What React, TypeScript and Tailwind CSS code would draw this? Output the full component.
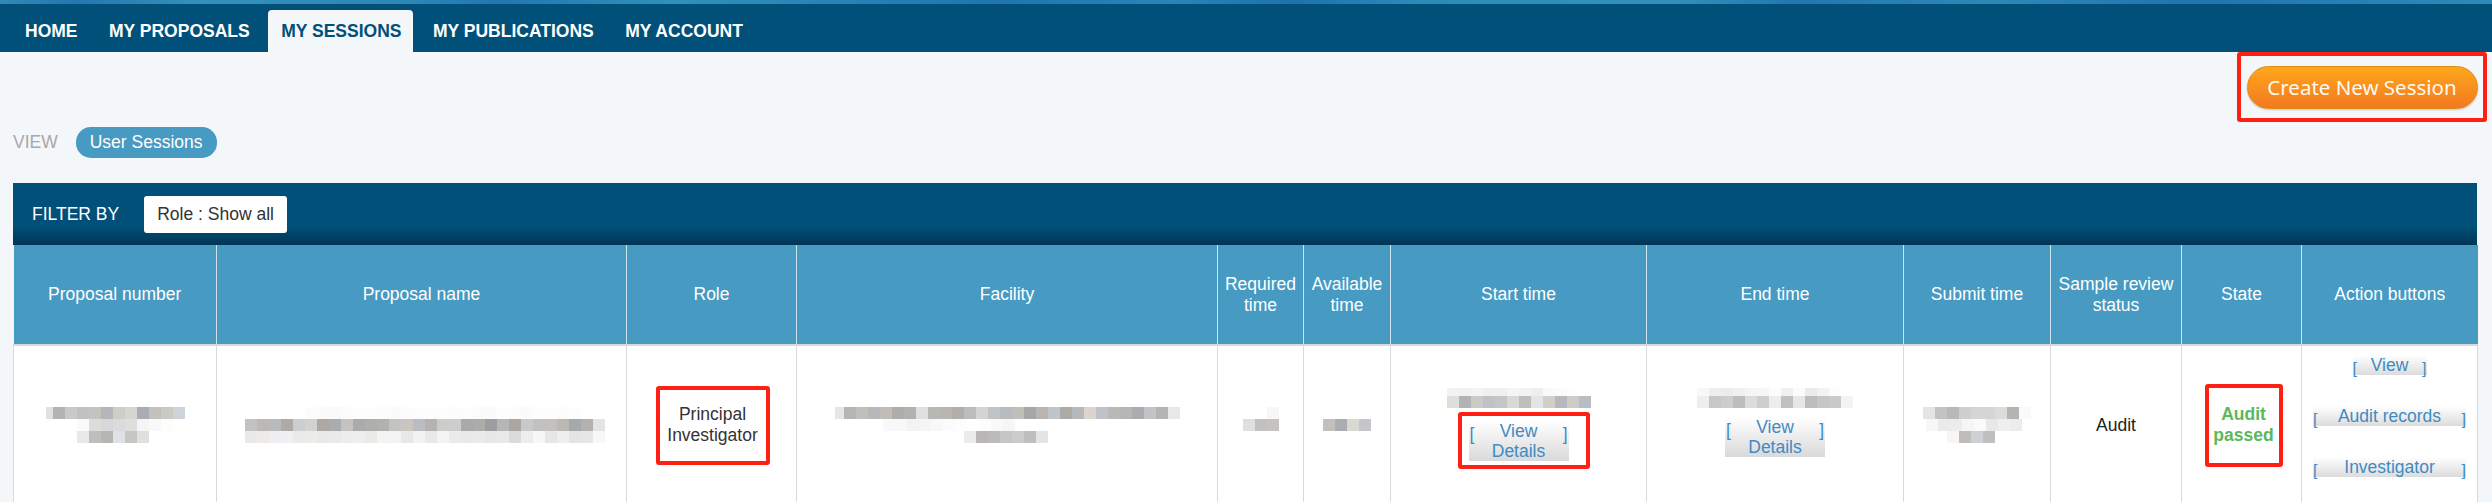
const COLS = [203, 410, 170, 421, 86, 87, 256, 257, 147, 131, 120, 176];

const HEADERS = [
  "Proposal number",
  "Proposal name",
  "Role",
  "Facility",
  "Required time",
  "Available time",
  "Start time",
  "End time",
  "Submit time",
  "Sample review status",
  "State",
  "Action buttons",
];

type Row = { dx?: number; h?: number; cells: string[] };

const PROPOSAL_NO: Row[] = [
  { dx: -5, cells: ["#e0e0de", "#b3b3b3", "#c8caca", "#bfc1c3", "#c5c3c0", "#b5b6bb", "#cecdc8", "#d5d6d1", "#a9adb3", "#c4c1bd", "#ccc9c4", "#cdd3d8"] },
  { dx: 31, cells: ["#fafafa", "#dcdcda", "#d8d8d8", "#d9dbde", "#dededc", "#f5f5f5", "#f9f9f9", "#fdfdfb"] },
  { dx: 31, cells: ["#e8e8e6", "#bebebe", "#b8b6b3", "#dde2e6", "#c8c6c3", "#e0e0e0"] },
];

const PROPOSAL_NAME: Row[] = [
  { dx: 60, cells: ["#fcfcfc", "#fbfbfb", "#fafafa", "#fcfcfc", "#fdfdfd", "#fdfdfd", "#fcfcfc", "#fbfbfb", "#fcfcfc", "#fdfdfd", "#fdfdfd", "#fdfdfd", "#fcfcfc", "#fdfdfd", "#fbfbfb", "#fbfbfb", "#fdfdfd", "#fcfcfc", "#fbfbfb", "#fdfdfd", "#fdfdfd", "#fcfcfc", "#fdfdfd"] },
  { cells: ["#c4c2c0", "#bcb8b3", "#b8babd", "#aeaaa6", "#cccdcf", "#d2d2d0", "#aea8a5", "#aaadb0", "#c4c3c0", "#abaaaa", "#aeaeac", "#b1b1ae", "#c4c3c1", "#cbc5c0", "#b9bcc2", "#b5b3b1", "#cccccb", "#cdcdcd", "#a9a9a9", "#aeaca8", "#9d9d9f", "#b6b6b8", "#aba7a0", "#c8c9cb", "#c1c2bf", "#c3c1bd", "#bbb8b4", "#a6a9aa", "#b4b2af", "#e4e4e6"] },
  { cells: ["#ebe9e7", "#eeeae8", "#eceef0", "#f0f0f2", "#ebeae8", "#ececea", "#ebe9e8", "#eaeaea", "#ededed", "#eeeeee", "#eaeae8", "#f4f4f2", "#f3f3f3", "#e8e8e8", "#f2f2f2", "#e9e9eb", "#f3f3f3", "#ebebeb", "#e9e9e9", "#eaeaea", "#e7e7e7", "#e9e9e9", "#dddbd9", "#ededed", "#f7f7f7", "#e8e6e4", "#eeeef0", "#e4e4e4", "#e6e6e6", "#f7f7f7"] },
];

const FACILITY: Row[] = [
  { dx: -3, cells: ["#e6e6e6", "#b5b5b5", "#c2bfbb", "#b6b9bc", "#c0bdb9", "#aeadab", "#b3b1ae", "#dde1e4", "#b9b7b4", "#b8b5b2", "#b2aeaa", "#babdbe", "#d7d3d0", "#c2c3c4", "#b7bcc0", "#bfbeb9", "#a8a7a7", "#bab5b0", "#bfc5c8", "#adaaa6", "#b4b9bc", "#dcd5cd", "#c0c2c7", "#bbb8b5", "#b8b6b3", "#acabaf", "#c4c4c6", "#b5b3b4", "#e6e8ea"] },
  { dx: 48, cells: ["#f9f9f9", "#f8f8f8", "#f3f3f3", "#f5f5f5", "#f8f8f8", "#fbfbfb", "#fdfdfd", "#ffffff", "#fdfdfd", "#f9f9f9", "#f6f6f6"] },
  { dx: 129, cells: ["#ebebeb", "#b8b7b5", "#bcbaba", "#c6c6c6", "#cccbc9", "#bebebe", "#e4e4e4"] },
];

const REQUIRED: Row[] = [
  { dx: 24, cells: ["#f7f7f7"] },
  { cells: ["#dfdfdf", "#c3c1c0", "#c5c3c2"] },
  { cells: [] },
];

const AVAILABLE: Row[] = [{ cells: ["#c3c0bb", "#acadb3", "#d9d8d2", "#c5c6ca"] }];

const START: Row[] = [
  { h: 8, cells: ["#f2f2f2", "#f1f1f1", "#f4f4f4", "#efefef", "#f0f0f0", "#f5f5f5", "#f2f2f2", "#eeeeee", "#f9f9f9", "#fbfbfb", "#fdfdfd", "#ffffff"] },
  { cells: ["#dfded9", "#b3b3b5", "#cbcbc6", "#c0c2c7", "#c4c6c8", "#dad8d4", "#c0bdbd", "#e2e4e5", "#d3cec8", "#b5b9bd", "#cfcbc5", "#b9bec2"] },
];

const END: Row[] = [
  { h: 8, cells: ["#f8f8f8", "#eeeeee", "#ececec", "#f0f0f0", "#f6f5f3", "#f4f6f8", "#fcfcfc", "#f0f0f0", "#fbfbfb", "#ebebeb", "#f2f2f2", "#fcfcfc", "#ffffff"] },
  { cells: ["#eeeeec", "#c7c7c7", "#cfcdca", "#bdbdbd", "#dedcd9", "#cdced0", "#ededed", "#c2c0bf", "#e6e6e6", "#bebcba", "#c6c6c6", "#c9c9c9", "#f3f3f3"] },
];

const SUBMIT: Row[] = [
  { cells: ["#e4e4e4", "#c3c3c3", "#b9b9b9", "#cfcfcf", "#d6d5d3", "#d5d5d5", "#dddcda", "#b5b4b0", "#f8fbfd"] },
  { dx: 3, cells: ["#f7f7f7", "#ebebeb", "#ececec", "#f6f6f6", "#fafafa", "#e8e8e8", "#eeeff0", "#ececec"] },
  { dx: 24, cells: ["#f8f5f2", "#bfbdbc", "#cdd0d4", "#c0bfbf"] },
];

function Mosaic({ rows }: { rows: Row[] }) {
  const width = Math.max(...rows.map((r) => (r.dx ?? 0) + r.cells.length * 12));
  let top = 0;
  const placed = rows.map((row) => {
    const y = top;
    top += row.h ?? 12;
    return { row, y };
  });
  return (
    <svg width={width} height={top} className="mx-auto block">
      {placed.map(({ row, y }) =>
        row.cells.map((fill, x) => (
          <rect key={`${y}-${x}`} x={(row.dx ?? 0) + x * 12} y={y} width="12" height={row.h ?? 12} fill={fill} />
        )),
      )}
    </svg>
  );
}

function Marked({ className, children }: { className: string; children: React.ReactNode }) {
  return (
    <div className={`inline-flex flex-col items-center justify-center rounded-[3px] border-[4px] border-[#ff1f13] ${className}`}>
      {children}
    </div>
  );
}

function ActionLink({ label, width }: { label: string; width: string }) {
  return (
    <a className={`mx-auto flex h-5 items-end justify-between bg-gradient-to-b from-white to-[#dcdcdc] leading-5 text-[#3f8bc2] ${width}`}>
      <span className="translate-y-[2px] text-[16px] leading-none">[</span>
      <span className="self-start">{label}</span>
      <span className="translate-y-[2px] text-[16px] leading-none">]</span>
    </a>
  );
}

function ViewDetails() {
  return (
    <a className="flex h-10 w-[100px] justify-between bg-gradient-to-b from-white to-[#d9d9d9] leading-5 text-[#3f8bc2]">
      <span className="pt-[3px] pl-px">[</span>
      <span className="text-center">
        View
        <br />
        Details
      </span>
      <span className="pt-[3px] pr-px">]</span>
    </a>
  );
}

export default function App() {
  return (
    <div className="h-[502px] overflow-hidden bg-[#f4f7fa] font-['Liberation_Sans',Arial,sans-serif] text-[17.5px]">
      <div className="h-1 bg-[linear-gradient(90deg,#3089b7_0%,#2378ae_3%,#3590bb_8%,#2e88b7_16%,#2178b0_20%,#3290ba_27%,#1f76b0_40%,#2a84b5_47%,#1c72ae_52%,#2e8bb8_57%,#3490bb_67%,#2178ae_72%,#2e88b6_80%,#1f75ae_88%,#2e8ab8_100%)]" />
      <nav className="flex h-12 items-end gap-[7.5px] bg-[#005079] pl-[13px] font-bold text-white">
        <a className="flex h-[42px] items-center px-3">HOME</a>
        <a className="flex h-[42px] items-center px-3">MY PROPOSALS</a>
        <a className="-ml-px flex h-[42px] items-center rounded-t-[4px] bg-[#f4f7fa] pl-[13px] pr-3 text-[#005079]">MY SESSIONS</a>
        <a className="flex h-[42px] items-center px-3">MY PUBLICATIONS</a>
        <a className="flex h-[42px] items-center px-3">MY ACCOUNT</a>
      </nav>

      <div className="flex justify-end pr-[5px]">
        <Marked className="h-[70px] w-[250px]">
          <button className="h-[43px] w-[231px] rounded-full border border-[#e08a12] bg-gradient-to-b from-[#fda71a] to-[#f37821] font-['Noto_Sans',sans-serif] text-[20.5px] text-[#fff8ee] shadow-[0_1px_2px_rgba(0,0,0,0.2)]">
            Create New Session
          </button>
        </Marked>
      </div>

      <div className="mt-[5px] flex items-center gap-[18px] pl-[13px]">
        <span className="text-[#a8a8a8]">VIEW</span>
        <span className="flex h-[31px] items-center rounded-[15px] bg-[#479ac2] px-[14px] text-white">User Sessions</span>
      </div>

      <div className="ml-[13px] mr-[15px] mt-[25px]">
        <div className="flex h-[62px] items-center gap-[25px] bg-gradient-to-b from-[#005079] from-70% to-[#003555] pl-[19px] text-white">
          <span>FILTER BY</span>
          <span className="flex h-[37px] items-center rounded-[3px] bg-white px-[13px] text-[#333]">Role : Show all</span>
        </div>

        <table className="w-full table-fixed border-collapse text-center leading-[21px] text-[#333]">
          <colgroup>
            {COLS.map((w, i) => (
              <col key={i} style={{ width: w }} />
            ))}
          </colgroup>
          <thead>
            <tr className="h-[100px] border-b-2 border-[#d9d9d9] bg-[#479ac2] text-white">
              {HEADERS.map((h) => (
                <th key={h} className="border-x border-[#cfe3ee] px-1 font-normal first:border-l-0 last:border-r-0">
                  {h}
                </th>
              ))}
            </tr>
          </thead>
          <tbody>
            <tr className="h-[160px] bg-white [&>td]:border [&>td]:border-[#d9d9d9]">
              <td><Mosaic rows={PROPOSAL_NO} /></td>
              <td className="pl-[6px]"><Mosaic rows={PROPOSAL_NAME} /></td>
              <td>
                <Marked className="ml-[2px] h-[79px] w-[114px]">Principal Investigator</Marked>
              </td>
              <td><Mosaic rows={FACILITY} /></td>
              <td><Mosaic rows={REQUIRED} /></td>
              <td><Mosaic rows={AVAILABLE} /></td>
              <td className="align-top pt-[42px]">
                <Mosaic rows={START} />
                <Marked className="ml-[10px] mt-1 h-[57px] w-[132px]">
                  <div className="w-full pl-[7px]">
                    <ViewDetails />
                  </div>
                </Marked>
              </td>
              <td className="align-top pt-[42px]">
                <Mosaic rows={END} />
                <div className="mt-[9px] flex justify-center">
                  <ViewDetails />
                </div>
              </td>
              <td><Mosaic rows={SUBMIT} /></td>
              <td className="text-[#222]">Audit</td>
              <td>
                <Marked className="ml-[4px] h-[83px] w-[78px] font-bold text-[#5cb85c]">
                  Audit
                  <br />
                  passed
                </Marked>
              </td>
              <td className="align-top pt-[9px]">
                <div className="flex flex-col gap-[31px]">
                  <ActionLink label="View" width="w-[74px]" />
                  <ActionLink label="Audit records" width="w-[153px]" />
                  <ActionLink label="Investigator" width="w-[153px]" />
                </div>
              </td>
            </tr>
          </tbody>
        </table>
      </div>
    </div>
  );
}
